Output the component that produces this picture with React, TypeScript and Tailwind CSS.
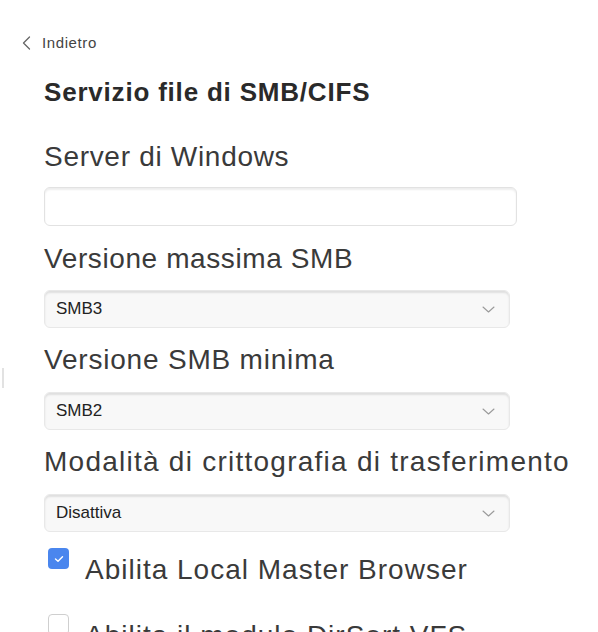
import React from "react";

type SelectProps = {
  value: string;
};

function Chevron() {
  return (
    <svg width="13" height="7" viewBox="0 0 13 7" fill="none">
      <path
        d="M1 1L6.5 6L12 1"
        stroke="#9a9a9a"
        strokeWidth="1.1"
        strokeLinecap="round"
        strokeLinejoin="round"
      />
    </svg>
  );
}

function FakeSelect({ value }: SelectProps) {
  return (
    <div className="flex h-[38px] w-[466px] items-center justify-between rounded-[6px] border border-[#e8e8e8] bg-[#f8f8f8] pl-[11px] pr-[14px] shadow-[inset_0_2px_2px_rgba(0,0,0,0.10)]">
      <span className="text-[17px] text-[#222]">{value}</span>
      <Chevron />
    </div>
  );
}

function Label({ children, className = "" }: { children: React.ReactNode; className?: string }) {
  return (
    <div className={`text-[28px] leading-[34px] text-[#3a3a3a] ${className}`}>
      {children}
    </div>
  );
}

export default function App() {
  return (
    <div className="relative h-[632px] w-[598px] overflow-hidden bg-white font-['Liberation_Sans',Arial,sans-serif] text-[#333]">
      <div className="absolute left-[2px] top-[368px] h-[20px] w-[2px] bg-[#e2e2e2]" />

      <div className="pt-[33px]">
        <div className="flex h-[20px] items-center pl-[22px]">
          <svg width="9" height="14" viewBox="0 0 9 14" fill="none">
            <path
              d="M7.5 1L1.5 7L7.5 13"
              stroke="#666"
              strokeWidth="1.3"
              strokeLinecap="round"
              strokeLinejoin="round"
            />
          </svg>
          <span className="ml-[11px] text-[15px] leading-[20px] tracking-[0.6px] text-[#444]">
            Indietro
          </span>
        </div>
      </div>

      <div className="pl-[44px]">
        <h1 className="mt-[23px] text-[26px] font-bold leading-[32px] tracking-[0.8px] text-[#2a2a2a]">
          Servizio file di SMB/CIFS
        </h1>

        <Label className="mt-[32px] tracking-[0.7px]">Server di Windows</Label>
        <input
          type="text"
          className="mt-[13px] block h-[39px] w-[473px] rounded-[6px] border border-[#e2e2e2] bg-white px-3 text-[17px] shadow-[inset_0_2px_2px_rgba(0,0,0,0.07)] outline-none"
        />

        <Label className="mt-[16px] tracking-[0.6px]">Versione massima SMB</Label>
        <div className="mt-[14px]">
          <FakeSelect value="SMB3" />
        </div>

        <Label className="mt-[15px] tracking-[0.8px]">Versione SMB minima</Label>
        <div className="mt-[15px]">
          <FakeSelect value="SMB2" />
        </div>

        <Label className="mt-[15px] tracking-[1.25px]">Modalità di crittografia di trasferimento</Label>
        <div className="mt-[15px]">
          <FakeSelect value="Disattiva" />
        </div>

        <div className="mt-[16px] flex items-start">
          <div className="ml-[4px] flex h-[21px] w-[21px] shrink-0 items-center justify-center rounded-[4px] bg-[#4a86ee]">
            <svg width="10" height="8" viewBox="0 0 10 8" fill="none">
              <path
                d="M1.5 4L4 6.3L8.5 1.7"
                stroke="white"
                strokeWidth="1.4"
                strokeLinecap="round"
                strokeLinejoin="round"
              />
            </svg>
          </div>
          <Label className="ml-[16px] mt-[5px] tracking-[1px]">Abilita Local Master Browser</Label>
        </div>

        <div className="mt-[27px] flex items-start">
          <div className="ml-[4px] h-[21px] w-[21px] shrink-0 rounded-[4px] border border-[#cfcfcf] bg-white" />
          <Label className="ml-[16px] mt-[5px] tracking-[1px]">Abilita il modulo DirSort VFS</Label>
        </div>
      </div>
    </div>
  );
}
